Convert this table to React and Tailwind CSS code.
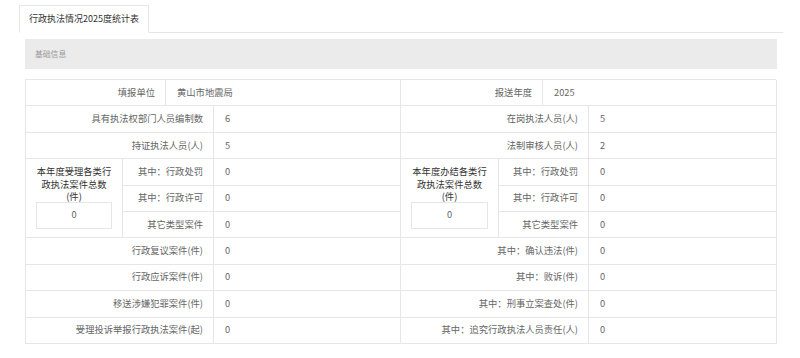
import React from 'react';

const topRows = [
  ['具有执法权部门人员编制数', '6', '在岗执法人员(人)', '5'],
  ['持证执法人员(人)', '5', '法制审核人员(人)', '2'],
];

const subRows = [
  ['其中：行政处罚', '0'],
  ['其中：行政许可', '0'],
  ['其它类型案件', '0'],
];

const bottomRows = [
  ['行政复议案件(件)', '0', '其中：确认违法(件)', '0'],
  ['行政应诉案件(件)', '0', '其中：败诉(件)', '0'],
  ['移送涉嫌犯罪案件(件)', '0', '其中：刑事立案查处(件)', '0'],
  ['受理投诉举报行政执法案件(起)', '0', '其中：追究行政执法人员责任(人)', '0'],
];

const Label = ({ children }) => (
  <div className="h-[26.4px] flex items-center justify-end pr-[10px] border-r border-b border-[#e6e6e6] whitespace-nowrap">
    {children}
  </div>
);

const Value = ({ children }) => (
  <div className="h-[26.4px] flex items-center pl-[11px] border-r border-b border-[#e6e6e6]">
    {children}
  </div>
);

// big cell spanning three rows, with a boxed total under the title
const TotalCell = ({ lines }) => (
  <div className="flex-1 flex flex-col items-center px-[10px] pt-[6px] border-r border-b border-[#e6e6e6] text-[#333]">
    <div className="text-center leading-[12.5px] whitespace-nowrap">
      {lines[0]}<br />{lines[1]}<br />{lines[2]}
    </div>
    <div className="w-full h-[27px] mt-[-1px] flex items-center justify-center border border-[#e6e6e6] text-[#666]">0</div>
  </div>
);

const Row = ({ r }) => (
  <div className="grid grid-cols-[188px_187px_188px_188px]">
    <Label>{r[0]}</Label>
    <Value>{r[1]}</Value>
    <Label>{r[2]}</Label>
    <Value>{r[3]}</Value>
  </div>
);

export default function App() {
  return (
    <div className="w-[800px] h-[358px] bg-white font-['Noto_Sans_CJK_SC',sans-serif] text-[#666] overflow-hidden">
      <div className="ml-[19px] w-[764px] pt-[5px]">
        {/* tab bar */}
        <div className="flex border-b border-[#e6e6e6] h-[28px]">
          <div className="h-[28px] px-[9px] flex items-center border border-[#e6e6e6] border-b-white bg-white text-[9px] text-[#333] -mb-px">
            行政执法情况2025度统计表
          </div>
        </div>

        <div className="mx-[6px] mt-[6px] h-[30px] bg-[#ebebeb] flex items-center pl-[10px] text-[7.8px] text-[#999]">
          基础信息
        </div>

        <div className="ml-[6px] w-[751px] mt-[10px] border-l border-t border-[#e6e6e6] text-[9.3px]">
          <div className="grid grid-cols-[140px_235px_142px_234px]">
            <Label>填报单位</Label>
            <Value>黄山市地震局</Value>
            <Label>报送年度</Label>
            <Value>2025</Value>
          </div>

          {topRows.map((r) => (
            <Row key={r[0]} r={r} />
          ))}

          <div className="grid grid-cols-[188px_187px_188px_188px]">
            <div className="flex">
              <TotalCell lines={['本年度受理各类行', '政执法案件总数', '(件)']} />
              <div className="w-[91px] flex flex-col">
                {subRows.map(([l]) => (
                  <Label key={l}>{l}</Label>
                ))}
              </div>
            </div>
            <div className="flex flex-col">
              {subRows.map(([l, v]) => (
                <Value key={l}>{v}</Value>
              ))}
            </div>
            <div className="flex">
              <TotalCell lines={['本年度办结各类行', '政执法案件总数', '(件)']} />
              <div className="w-[90px] flex flex-col">
                {subRows.map(([l]) => (
                  <Label key={l}>{l}</Label>
                ))}
              </div>
            </div>
            <div className="flex flex-col">
              {subRows.map(([l, v]) => (
                <Value key={l}>{v}</Value>
              ))}
            </div>
          </div>

          {bottomRows.map((r) => (
            <Row key={r[0]} r={r} />
          ))}
        </div>
      </div>
    </div>
  );
}
